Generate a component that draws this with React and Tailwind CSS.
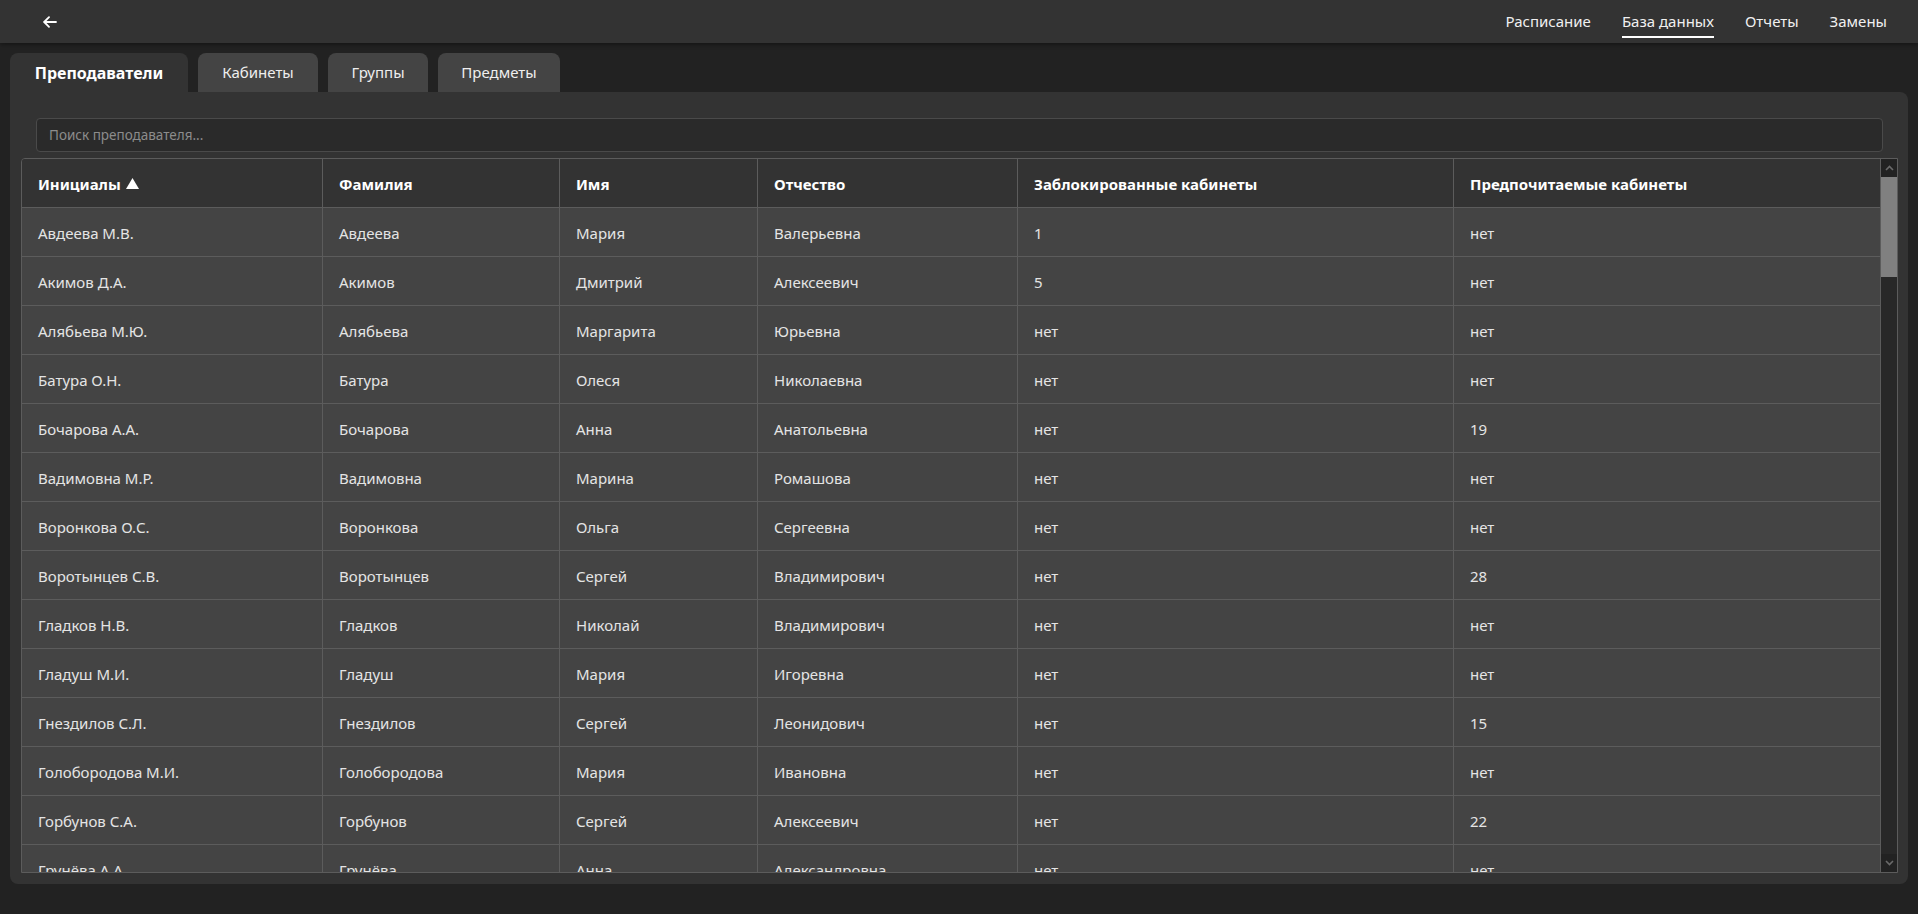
import React from "react";

const rows = [
  ["Авдеева М.В.", "Авдеева", "Мария", "Валерьевна", "1", "нет"],
  ["Акимов Д.А.", "Акимов", "Дмитрий", "Алексеевич", "5", "нет"],
  ["Алябьева М.Ю.", "Алябьева", "Маргарита", "Юрьевна", "нет", "нет"],
  ["Батура О.Н.", "Батура", "Олеся", "Николаевна", "нет", "нет"],
  ["Бочарова А.А.", "Бочарова", "Анна", "Анатольевна", "нет", "19"],
  ["Вадимовна М.Р.", "Вадимовна", "Марина", "Ромашова", "нет", "нет"],
  ["Воронкова О.С.", "Воронкова", "Ольга", "Сергеевна", "нет", "нет"],
  ["Воротынцев С.В.", "Воротынцев", "Сергей", "Владимирович", "нет", "28"],
  ["Гладков Н.В.", "Гладков", "Николай", "Владимирович", "нет", "нет"],
  ["Гладуш М.И.", "Гладуш", "Мария", "Игоревна", "нет", "нет"],
  ["Гнездилов С.Л.", "Гнездилов", "Сергей", "Леонидович", "нет", "15"],
  ["Голобородова М.И.", "Голобородова", "Мария", "Ивановна", "нет", "нет"],
  ["Горбунов С.А.", "Горбунов", "Сергей", "Алексеевич", "нет", "22"],
  ["Грунёва А.А.", "Грунёва", "Анна", "Александровна", "нет", "нет"],
];

const headers = [
  "Инициалы",
  "Фамилия",
  "Имя",
  "Отчество",
  "Заблокированные кабинеты",
  "Предпочитаемые кабинеты",
];

const gridCols =
  "grid grid-cols-[301px_237px_198px_260px_436px_1fr]";

function Cell({ children, header, last }) {
  return (
    <div
      className={
        "flex items-center pl-4 pt-[3px] border-b border-[#5c5c5c] whitespace-nowrap " +
        (last ? "" : "border-r ") +
        (header
          ? "font-bold text-white"
          : "text-[#e4e4e4]")
      }
    >
      {children}
    </div>
  );
}

export default function App() {
  return (
    <div className="h-screen w-full bg-[#222222] flex flex-col font-['Noto_Sans','Open_Sans',sans-serif] overflow-hidden">
      {/* Top bar */}
      <div className="h-[43px] shrink-0 bg-[#333333] flex items-center justify-between pl-[43px] pr-[31px] shadow-[0_2px_4px_rgba(0,0,0,0.35)] relative z-10">
        <svg width="14" height="12" viewBox="0 0 14 12" fill="none" stroke="#ffffff" strokeWidth="1.8" strokeLinecap="round" strokeLinejoin="round">
          <path d="M13 6H1.5" />
          <path d="M6 1.2L1.2 6L6 10.8" />
        </svg>
        <nav className="flex h-full items-center gap-[31px] text-[15px] text-[#f0f0f0]">
          <span>Расписание</span>
          <span className="relative h-full flex items-center">
            База данных
            <span className="absolute left-0 right-0 bottom-[5px] h-[2px] bg-white"></span>
          </span>
          <span>Отчеты</span>
          <span>Замены</span>
        </nav>
      </div>

      {/* Main */}
      <div className="flex-1 flex flex-col px-[10px] pt-[10px] pb-[30px] min-h-0">
        {/* Tabs */}
        <div className="flex gap-[10px] h-[39px] shrink-0 text-[15px]">
          <div className="w-[178px] bg-[#333333] rounded-t-lg flex items-center justify-center font-bold text-[16px] text-white">
            Преподаватели
          </div>
          <div className="w-[120px] bg-[#444444] rounded-t-lg flex items-center justify-center text-[#eeeeee]">
            Кабинеты
          </div>
          <div className="w-[100px] bg-[#444444] rounded-t-lg flex items-center justify-center text-[#eeeeee]">
            Группы
          </div>
          <div className="w-[122px] bg-[#444444] rounded-t-lg flex items-center justify-center text-[#eeeeee]">
            Предметы
          </div>
        </div>

        {/* Panel */}
        <div className="flex-1 min-h-0 bg-[#333333] rounded-b-lg rounded-tr-lg pt-[26px] pl-[11px] pr-[10px] pb-[11px] flex flex-col">
          <div className="mx-[15px] h-[34px] shrink-0 bg-[#2a2a2a] border border-[#4a4a4a] rounded-[4px] flex items-center pl-[12px] text-[13.5px] text-[#8c8c8c]">
            Поиск преподавателя...
          </div>

          <div className="mt-[6px] flex-1 min-h-0 border border-[#5c5c5c] rounded-tl-[4px] flex overflow-hidden">
            <div className="flex-1 min-w-0 overflow-hidden text-[15px]">
              <div className={gridCols + " h-[49px] bg-[#333333]"}>
                {headers.map((h, i) => (
                  <Cell key={i} header last={i === headers.length - 1}>
                    {h}
                    {i === 0 && (
                      <svg className="ml-[5px] mb-[2px]" width="13" height="11" viewBox="0 0 13 11">
                        <path d="M6.5 0L13 11H0Z" fill="#ffffff" />
                      </svg>
                    )}
                  </Cell>
                ))}
              </div>
              {rows.map((r, ri) => (
                <div key={ri} className={gridCols + " h-[49px] bg-[#444444]"}>
                  {r.map((c, i) => (
                    <Cell key={i} last={i === r.length - 1}>
                      {c}
                    </Cell>
                  ))}
                </div>
              ))}
            </div>
            {/* Scrollbar */}
            <div className="w-[17px] shrink-0 border-l border-[#5c5c5c] bg-[#282828] flex flex-col">
              <div className="h-[18px] bg-[#222222] flex items-center justify-center">
                <svg width="9" height="6" viewBox="0 0 9 6" fill="none" stroke="#6a6a6a" strokeWidth="1.6">
                  <path d="M1 5L4.5 1.5L8 5" />
                </svg>
              </div>
              <div className="h-[100px] bg-[#808080]"></div>
              <div className="flex-1"></div>
              <div className="h-[18px] bg-[#222222] flex items-center justify-center">
                <svg width="9" height="6" viewBox="0 0 9 6" fill="none" stroke="#6a6a6a" strokeWidth="1.6">
                  <path d="M1 1L4.5 4.5L8 1" />
                </svg>
              </div>
            </div>
          </div>
        </div>
      </div>
    </div>
  );
}
